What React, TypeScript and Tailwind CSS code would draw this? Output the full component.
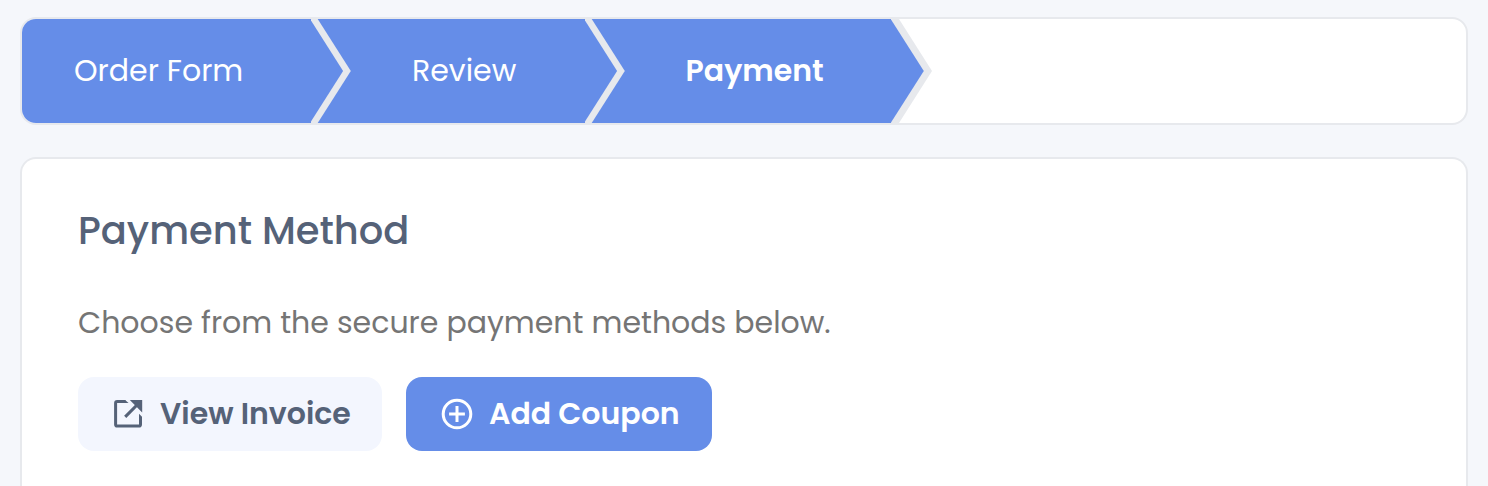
import React from 'react';

function Chevron({ last = false }: { last?: boolean }) {
  return last ? (
    <svg className="absolute left-full top-0 z-10" width="42" height="104" viewBox="0 0 42 104">
      <polygon points="0,0 8,0 41,52 8,104 0,104" fill="#e7e9ed" />
      <polygon points="-0.3,0 32.8,52 -0.3,104" fill="#658de8" />
    </svg>
  ) : (
    <svg className="absolute left-full top-0 z-10" width="40" height="104" viewBox="0 0 40 104">
      <polygon points="0,0 6.7,0 39.8,52 6.7,104 0,104" fill="#e7e9ed" />
      <polygon points="-1,0 32.1,52 -1,104" fill="#658de8" />
    </svg>
  );
}

function InvoiceIcon() {
  return (
    <svg className="shrink-0" width="30" height="30" viewBox="0 0 30 30" fill="none">
      <path
        d="M12.5 2.6H4.2C3.3 2.6 2.6 3.3 2.6 4.2V25.4C2.6 26.3 3.3 27 4.2 27H25.9C26.8 27 27.5 26.3 27.5 25.4V18"
        stroke="currentColor"
        strokeWidth="3"
      />
      <path d="M12 1.1L15.6 4.1H11Z M26 14.8L29 17.8V20H26Z" fill="currentColor" />
      <path d="M12.2 17.8L24 6" stroke="currentColor" strokeWidth="3.1" />
      <path d="M16.8 1.1H29.2V13.5Z" fill="currentColor" />
    </svg>
  );
}

function PlusIcon() {
  return (
    <svg className="shrink-0" width="32" height="32" viewBox="0 0 32 32" fill="none" stroke="currentColor">
      <circle cx="16" cy="16" r="13.8" strokeWidth="3" />
      <path d="M16 8.1V23.9M8.1 16H23.9" strokeWidth="3" />
    </svg>
  );
}

export default function App() {
  return (
    <div className="h-[486px] overflow-hidden bg-[#f5f7fb] px-5 pt-[17px] font-['Poppins','Inter',sans-serif] antialiased">
      <div className="flex h-[108px] overflow-hidden rounded-2xl border-2 border-[#e7e9ed] bg-white text-[30px] text-white">
        <div className="relative flex w-[289px] items-center bg-[#658de8] pb-0.5 pl-[52px]">
          Order Form
          <Chevron />
        </div>
        <div className="relative flex w-[274px] items-center bg-[#658de8] pb-0.5 pl-[101px]">
          Review
          <Chevron />
        </div>
        <div className="relative flex w-[306px] items-center bg-[#658de8] pb-0.5 pl-[100.6px] font-semibold">
          Payment
          <Chevron last />
        </div>
      </div>

      <div className="mt-8 h-[329px] rounded-t-2xl border-2 border-b-0 border-[#e7e9ed] bg-white px-14">
        <h1 className="pt-[47px] text-[38.4px] leading-[50px] font-medium text-[#556278]">Payment Method</h1>
        <p className="mt-[45px] text-[30px] leading-[44px] text-[#757575]">
          Choose from the secure payment methods below.
        </p>
        <div className="mt-8 flex gap-6 text-[30px] font-semibold">
          <button className="flex h-[74px] w-[304px] items-center gap-[17px] rounded-2xl bg-[#f3f6fe] pl-[35px] whitespace-nowrap text-[#556278]">
            <InvoiceIcon />
            <span className="pb-0.5">View Invoice</span>
          </button>
          <button className="flex h-[74px] w-[305.5px] items-center gap-4 rounded-2xl bg-[#658de8] pl-[35px] whitespace-nowrap text-white">
            <PlusIcon />
            <span className="pb-0.5">Add Coupon</span>
          </button>
        </div>
      </div>
    </div>
  );
}
